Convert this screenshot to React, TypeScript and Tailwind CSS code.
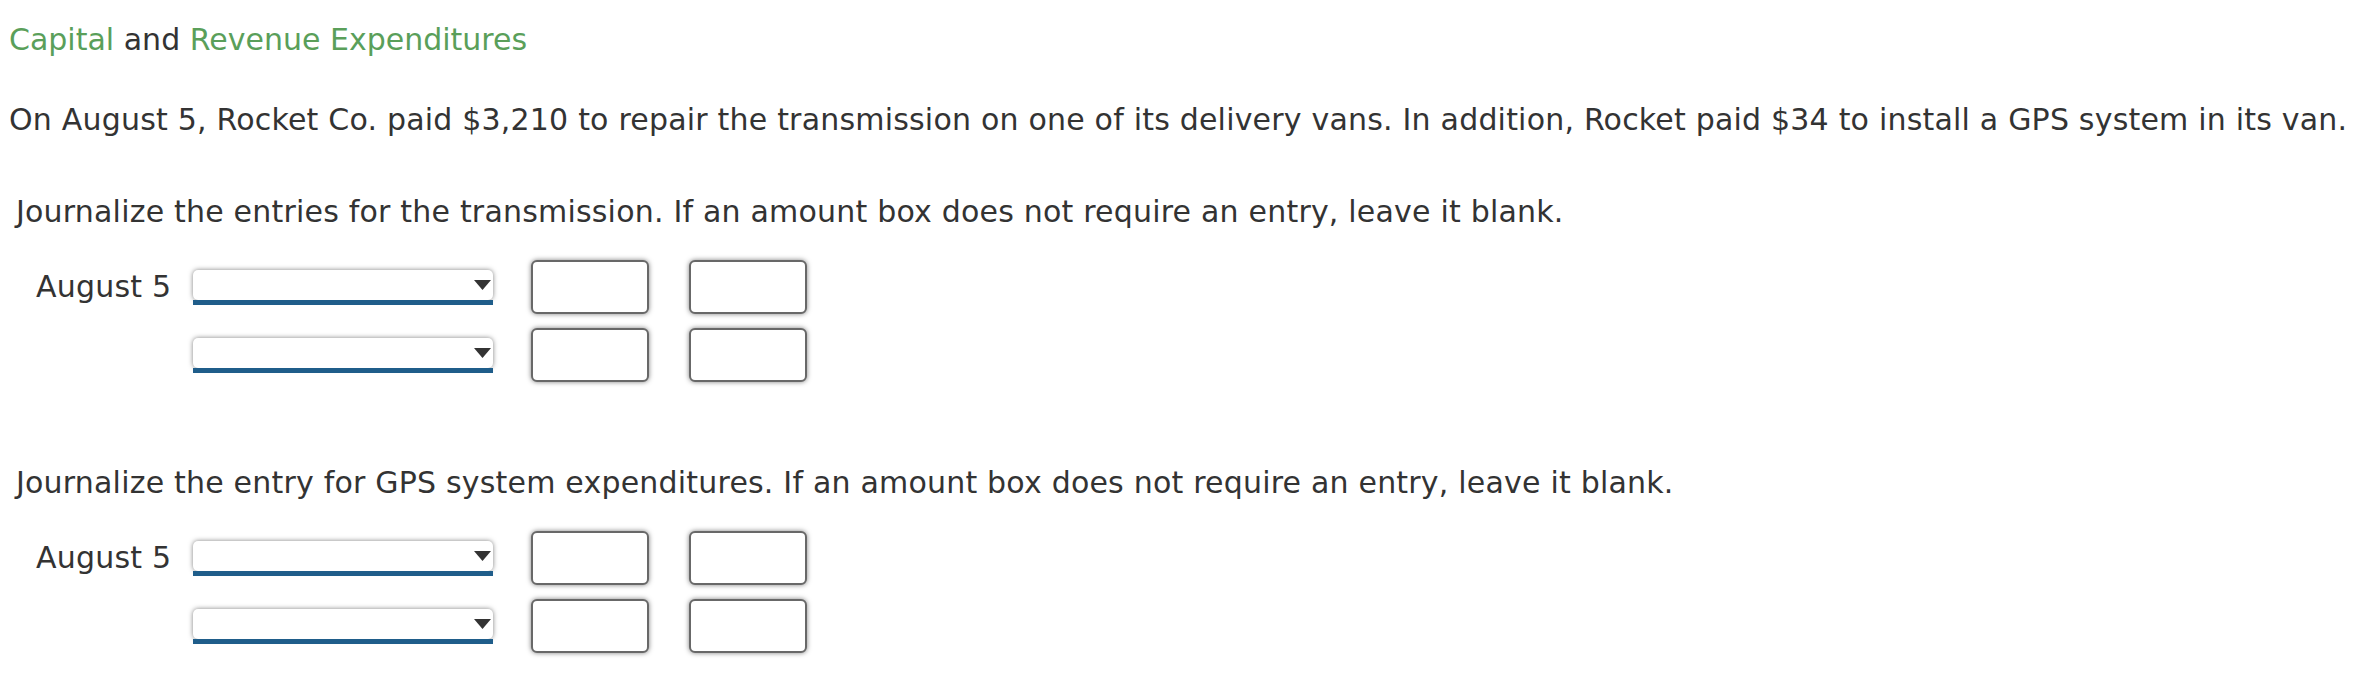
import React from "react";

function Select() {
  return (
    <div className="flex w-[300px] flex-col">
      <div className="flex h-[30px] items-center justify-end rounded-[5px] bg-white pr-[2px] shadow-[0_0_5px_rgba(0,0,0,0.5)]">
        <svg width="17" height="10" viewBox="0 0 17 10">
          <polygon points="0,0 17,0 8.5,10" fill="#333333" />
        </svg>
      </div>
      <div className="h-[5px] bg-[#1f5d8a]" />
    </div>
  );
}

function AmountBox({ className = "" }: { className?: string }) {
  return (
    <div
      className={
        "h-[54px] w-[118px] rounded-[6px] border-2 border-[#686868] bg-white shadow-[0_0_5px_rgba(0,0,0,0.5)] " +
        className
      }
    />
  );
}

function Row({ label }: { label?: string }) {
  return (
    <div className="flex h-[54px] items-center">
      <div className="ml-[27px] w-[157px] leading-[36px]">{label ?? ""}</div>
      <Select />
      <AmountBox className="ml-[38px]" />
      <AmountBox className="ml-[40px]" />
    </div>
  );
}

function Section({ text, className = "" }: { text: string; className?: string }) {
  return (
    <div className={className}>
      <p className="pl-[7px] leading-[36px]">{text}</p>
      <div className="mt-[30px] flex flex-col gap-[14px]">
        <Row label="August 5" />
        <Row />
      </div>
    </div>
  );
}

export default function App() {
  return (
    <div className="min-h-[698px] w-[2365px] bg-white pl-[9px] pt-[22px] font-['DejaVu_Sans',Verdana,sans-serif] text-[30px] tracking-[0.2px] text-[#333333]">
      <h1 className="text-[30px] font-normal leading-[36px] tracking-normal">
        <span className="text-[#5a9f5a]">Capital</span> and{" "}
        <span className="text-[#5a9f5a]">Revenue Expenditures</span>
      </h1>
      <p className="mt-[44px] whitespace-nowrap leading-[36px]">
        On August 5, Rocket Co. paid $3,210 to repair the transmission on one of its delivery vans. In addition, Rocket paid $34 to install a GPS system in its van.
      </p>
      <Section
        className="mt-[56px]"
        text="Journalize the entries for the transmission. If an amount box does not require an entry, leave it blank."
      />
      <Section
        className="mt-[83px]"
        text="Journalize the entry for GPS system expenditures. If an amount box does not require an entry, leave it blank."
      />
    </div>
  );
}
